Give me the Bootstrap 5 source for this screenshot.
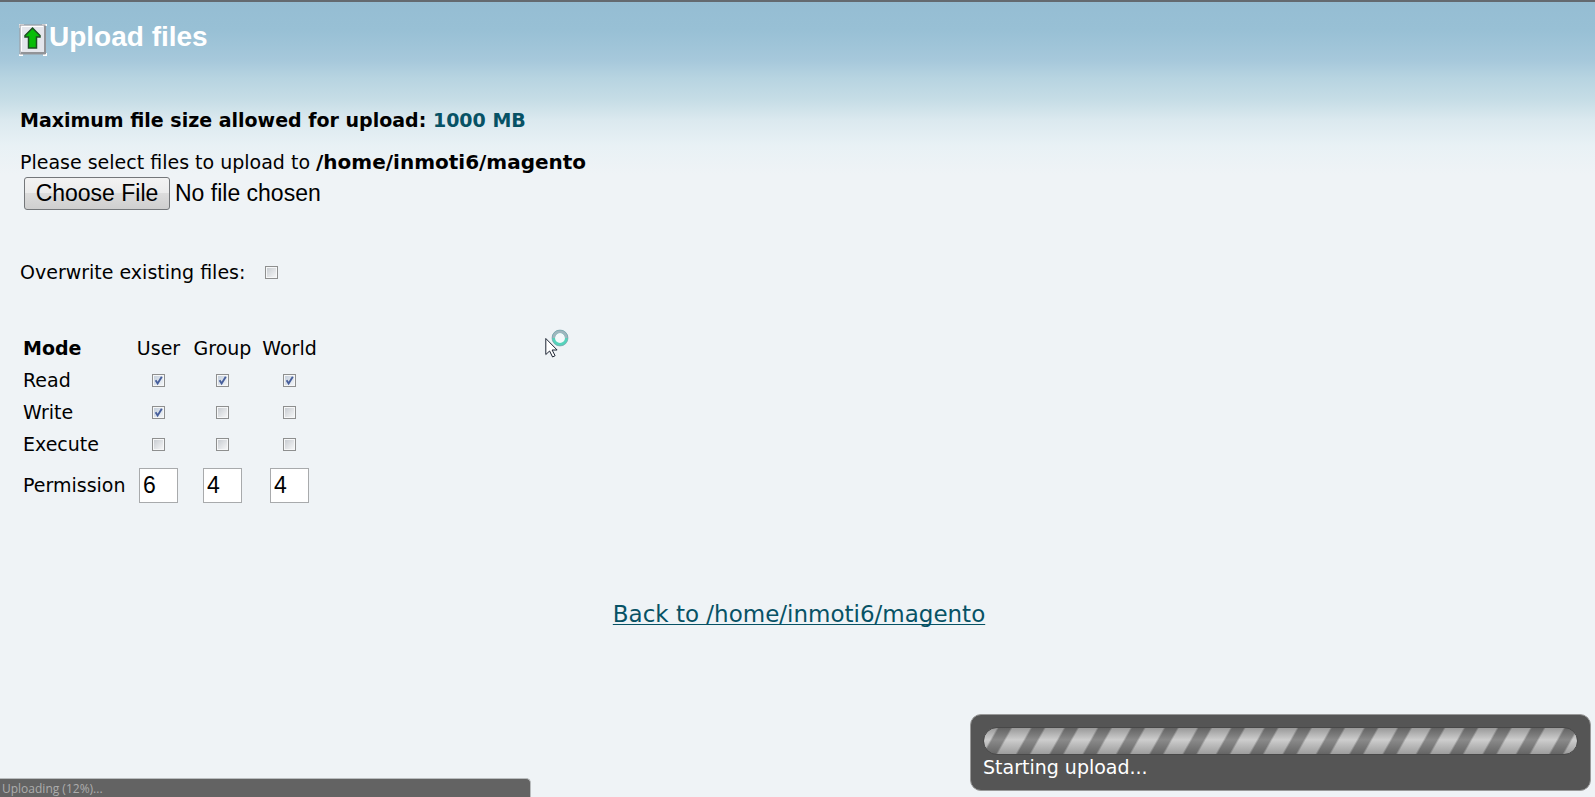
<!DOCTYPE html>
<html lang="en">
<head>
<meta charset="utf-8">
<meta name="viewport" content="width=device-width, initial-scale=1">
<title>Upload files</title>
<link rel="stylesheet" href="https://cdn.jsdelivr.net/npm/bootstrap@5.3.0/dist/css/bootstrap.min.css">
<style>
  body {
    min-height: 100vh;
    border-top: 2px solid #646a70;
    background: #eff3f6 linear-gradient(#95bdd3 0, #98c0d5 30px, #a6c8db 60px, #b7d4e1 78px, #c6dde6 100px, #dbe9ef 120px, #e8f1f5 145px, #eff3f6 175px) no-repeat;
    font: 19px/24px "DejaVu Sans", sans-serif;
    color: #000;
  }
  main { padding: 20px 20px 0 19px; }
  form { padding-left: 1px; }
  .title-icon { margin-top: 2px; }
  .page-title { margin-left: 2px; font: bold 28px/30px "Liberation Sans", sans-serif; color: #fff; }
  .teal { color: #075265; }
  .size-limit { margin: 52px 0 18px; }
  .target-path { font-size: 20px; }
  .file-pick { display: block; width: 400px; margin: 3px 0 0 4px; font: 23px/31px "Liberation Sans", sans-serif; }
  .file-pick::file-selector-button {
    font: inherit;
    height: 33px;
    width: 146px;
    padding: 0;
    margin-right: 5px;
    border: 1px solid #74777a;
    border-radius: 3px;
    background: linear-gradient(#f3f3f3, #ebebeb 50%, #dcdcdc 50%, #cfcfcf);
    color: #000;
  }
  .overwrite { margin-top: 50px; gap: 20px; }
  .tick {
    appearance: none;
    display: block;
    width: 13px;
    height: 13px;
    margin: 0 auto;
    border: 1px solid #8e8f8f;
    background: linear-gradient(135deg, #c9cdd2, #f4f5f6) content-box, #f6f7f8;
    padding: 1px;
  }
  .tick:checked {
    background: url("data:image/svg+xml,%3Csvg xmlns='http://www.w3.org/2000/svg' viewBox='0 0 11 11'%3E%3Cpath d='M2.6 5.3 4.6 8.4 8.8 1.8' fill='none' stroke='%23475f9c' stroke-width='1.9'/%3E%3C/svg%3E") border-box center / 11px 11px no-repeat, linear-gradient(135deg, #c5cfdc, #f2f5f8) content-box, #f6f7f8;
  }
  .modes { margin: 48px 0 0 3px; border-collapse: separate; border-spacing: 0; }
  .modes th { font-weight: normal; }
  .modes th, .modes td { height: 32px; padding: 0; vertical-align: middle; }
  .modes tr > :first-child { width: 108px; }
  .modes tr > :nth-child(2) { width: 55px; }
  .modes tr > :nth-child(3) { width: 73px; }
  .modes tr > :nth-child(4) { width: 61px; }
  .modes tfoot th, .modes tfoot td { height: 50px; }
  .digit {
    display: block;
    width: 39px;
    height: 35px;
    margin: 0 auto;
    padding: 0 3px;
    border: 1px solid #a8aaac;
    background: #fff;
    font: 23px/30px "Liberation Sans", sans-serif;
  }
  .back { margin-top: 90px; padding-left: 4px; }
  .back-link { font-size: 23px; line-height: 28px; text-underline-offset: 2px; text-decoration-thickness: 1px; text-decoration-skip-ink: none; }
  .upload-panel {
    right: 4px;
    bottom: 6px;
    width: 621px;
    height: 77px;
    padding: 12px;
    border: 1px solid #999;
    border-radius: 11px;
    background: #555;
    color: #fff;
  }
  .stripes {
    height: 28px;
    border: 1px solid #484848;
    border-radius: 14px;
    background:
      linear-gradient(rgba(40,40,40,.28), rgba(255,255,255,.12) 45%, rgba(50,50,50,.28)),
      repeating-linear-gradient(119.5deg, #c6c6c6 0 11px, #7a7a7a 13px 23px, #c6c6c6 25px 29px);
  }
  .status-strip {
    width: 531px;
    height: 19px;
    padding-left: 2px;
    border: solid #b9bcbe;
    border-width: 1px 1px 0 0;
    border-radius: 0 5px 0 0;
    background: #636363;
    color: #adadad;
    font: 12px/19px "Open Sans", sans-serif;
  }
  .pointer { left: 545px; top: 328px; }
</style>
</head>
<body>
<main>
  <header class="d-flex align-items-start">
    <svg width="28" height="32" viewBox="0 0 28 32" class="title-icon" aria-hidden="true">
      <path d="M0 1h5M23 1h5M0 31h4M24 31h4M1 0v4M27 29v3" stroke="#fff" stroke-width="2"/>
      <rect x="1" y="1" width="25" height="29" fill="#e4e6ec" stroke="#99999d"/>
      <path d="M2 29h24V2" fill="none" stroke="#929498" stroke-width="2"/>
      <path d="M2.500 27V2.500H24" fill="none" stroke="#fff"/>
      <path d="M13.500 4 21 11.500V13h-3.500v11h-8V13H6v-1.500z" fill="#08bd08" stroke="#1c4f22" stroke-width="1.500"/>
    </svg>
    <h1 class="page-title mb-0">Upload files</h1>
  </header>

  <form>
    <p class="size-limit fw-bold">Maximum file size allowed for upload: <span class="teal">1000 MB</span></p>
    <label for="upload" class="d-block">Please select files to upload to <b class="target-path">/home/inmoti6/magento</b></label>
    <input type="file" id="upload" class="file-pick">

    <div class="overwrite d-flex align-items-center">
      <label for="overwrite">Overwrite existing files:</label>
      <input type="checkbox" id="overwrite" class="tick m-0">
    </div>

    <table class="modes">
      <thead>
        <tr><th scope="col"><b>Mode</b></th><th scope="col" class="text-center">User</th><th scope="col" class="text-center">Group</th><th scope="col" class="text-center">World</th></tr>
      </thead>
      <tbody>
        <tr><th scope="row">Read</th><td><input type="checkbox" class="tick" aria-label="User read" checked></td><td><input type="checkbox" class="tick" aria-label="Group read" checked></td><td><input type="checkbox" class="tick" aria-label="World read" checked></td></tr>
        <tr><th scope="row">Write</th><td><input type="checkbox" class="tick" aria-label="User write" checked></td><td><input type="checkbox" class="tick" aria-label="Group write"></td><td><input type="checkbox" class="tick" aria-label="World write"></td></tr>
        <tr><th scope="row">Execute</th><td><input type="checkbox" class="tick" aria-label="User execute"></td><td><input type="checkbox" class="tick" aria-label="Group execute"></td><td><input type="checkbox" class="tick" aria-label="World execute"></td></tr>
      </tbody>
      <tfoot>
        <tr><th scope="row">Permission</th><td><input type="text" class="digit" aria-label="User permission" value="6"></td><td><input type="text" class="digit" aria-label="Group permission" value="4"></td><td><input type="text" class="digit" aria-label="World permission" value="4"></td></tr>
      </tfoot>
    </table>
  </form>

  <p class="back text-center mb-0"><a href="#" class="back-link teal">Back to /home/inmoti6/magento</a></p>
</main>

<svg class="pointer position-absolute" width="26" height="32" viewBox="0 0 26 32" aria-hidden="true">
  <circle cx="15" cy="10" r="6.500" fill="#f3f8fa" stroke="#55d3bb" stroke-width="3"/>
  <path d="M8.500 10a6.500 6.500 0 0 1 13 0" fill="none" stroke="#9fb6be" stroke-width="3"/>
  <circle cx="15" cy="10" r="8" fill="none" stroke="#6f9aa5" stroke-width=".6"/>
  <path d="M.8 10.500v16l3.800-3.500 3 6 2.500-1.300-3-5.700h5z" fill="#fff" stroke="#1d2433"/>
</svg>

<section class="upload-panel position-fixed">
  <div class="stripes" role="progressbar" aria-label="Upload progress"></div>
  <div>Starting upload...</div>
</section>
<div class="status-strip position-fixed start-0 bottom-0">Uploading (12%)...</div>

<script src="https://cdn.jsdelivr.net/npm/bootstrap@5.3.0/dist/js/bootstrap.bundle.min.js"></script>
</body>
</html>
